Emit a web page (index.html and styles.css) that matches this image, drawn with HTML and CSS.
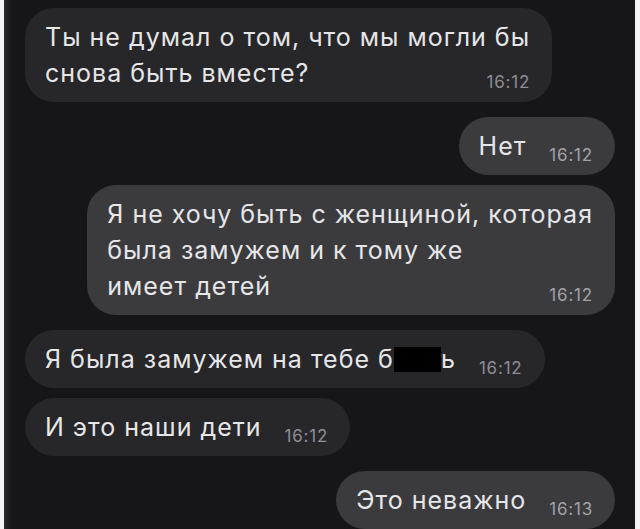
FILE: index.html
```html
<!DOCTYPE html>
<html lang="ru">
<head>
    <meta charset="UTF-8">
    <meta name="viewport" content="width=device-width, initial-scale=1.0">
    <title>Чат</title>
    <link rel="stylesheet" href="styles.css">
</head>
<body>
    <div class="screen">
        <div class="chat">
            <div class="group in">
                <div class="msg">
                    <p>Ты не думал о том, что мы могли бы</p>
                    <div class="row"><span>снова быть вместе?</span><time>16:12</time></div>
                </div>
            </div>
            <div class="group out">
                <div class="msg">
                    <div class="row"><span>Нет</span><time>16:12</time></div>
                </div>
                <div class="msg">
                    <p>Я не хочу быть с женщиной, которая</p>
                    <p>была замужем и к тому же</p>
                    <div class="row"><span>имеет детей</span><time>16:12</time></div>
                </div>
            </div>
            <div class="group in">
                <div class="msg">
                    <div class="row"><span>Я была замужем на тебе б<i class="redact"></i>ь</span><time>16:12</time></div>
                </div>
                <div class="msg">
                    <div class="row"><span>И это наши дети</span><time>16:12</time></div>
                </div>
            </div>
            <div class="group out">
                <div class="msg">
                    <div class="row"><span>Это неважно</span><time>16:13</time></div>
                </div>
            </div>
        </div>
    </div>
</body>
</html>
```

FILE: styles.css
```css
body {
    margin: 0;
    background: #f4f4f4;
    font-family: Inter, "Liberation Sans", sans-serif;
}
.screen {
    margin: 0 5px 0 4px;
    height: 529px;
    overflow: hidden;
    background: linear-gradient(to right, #2c2c2f 0, #1b1b1d 5px, #161618 10px);
}
.chat {
    display: flex;
    flex-direction: column;
    gap: 15px;
    padding: 8px 20px 0 21px;
}
.group {
    display: flex;
    flex-direction: column;
    gap: 10px;
}
.group.in {
    align-items: flex-start;
}
.group.out {
    align-items: flex-end;
}
.msg {
    padding: 11px 22px 11px 20px;
    border-radius: 29px;
    font-size: 25px;
    line-height: 36px;
    letter-spacing: 1px;
    color: #e6e6e8;
}
.in .msg {
    background: #27272a;
}
.out .msg {
    background: #3b3b3e;
}
.msg p {
    margin: 0;
}
.row {
    display: flex;
    align-items: flex-end;
    justify-content: space-between;
    gap: 23px;
}
time {
    font-size: 17px;
    line-height: 17px;
    letter-spacing: 0.8px;
    color: #8e8e93;
}
.out time {
    color: #a2a2a6;
}
.redact {
    display: inline-block;
    width: 47px;
    height: 25px;
    background: #000;
    vertical-align: -4px;
}
```
